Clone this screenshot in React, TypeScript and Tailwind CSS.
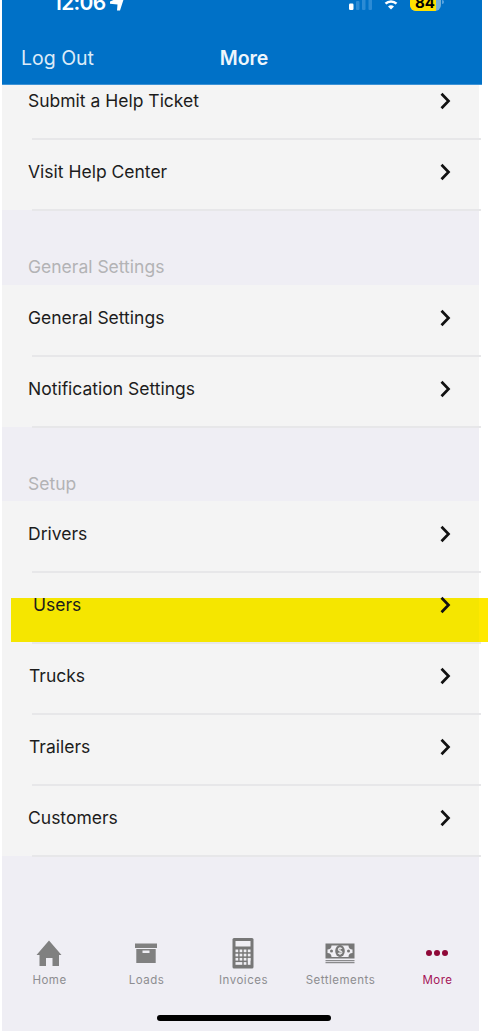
import type { ReactNode } from 'react';
import clsx from 'clsx';

type Item = { label: string; highlighted?: boolean; indent?: string };
type Section = { title?: string; items: Item[] };

const sections: Section[] = [
  { items: [{ label: 'Submit a Help Ticket' }, { label: 'Visit Help Center' }] },
  {
    title: 'General Settings',
    items: [{ label: 'General Settings' }, { label: 'Notification Settings' }],
  },
  {
    title: 'Setup',
    items: [
      { label: 'Drivers' },
      { label: 'Users', highlighted: true, indent: 'pl-[31px]' },
      { label: 'Trucks', indent: 'pl-[27px]' },
      { label: 'Trailers', indent: 'pl-[27px]' },
      { label: 'Customers' },
    ],
  },
];

function HomeIcon() {
  return (
    <svg width="26" height="32" viewBox="0 0 26 32" fill="#808080">
      <path d="M13 3.5 25.5 18H23v11h-6.500v-8h-6.500v8H3.500V18H.5z" />
    </svg>
  );
}

function LoadsIcon() {
  return (
    <svg width="22" height="32" viewBox="0 0 22 32" fill="#808080">
      <path d="M0 6.500h22v4.500H0z" />
      <path fillRule="evenodd" d="M1.300 12h19.400v14H1.300zM7.500 13.600v2.400h7v-2.400z" />
    </svg>
  );
}

function InvoicesIcon() {
  return (
    <svg width="22" height="32" viewBox="0 0 22 32">
      <rect x=".5" y="1" width="21" height="30.500" rx="1.500" fill="#777" />
      <g fill="#f0eff4">
        <rect x="3.500" y="4" width="15" height="5.500" />
        {[12.5, 16.7, 20.9].map((y) =>
          [3.5, 7.6, 11.7, 15.8].map((x) => <rect key={`${x}-${y}`} x={x} y={y} width="2.700" height="2.700" />),
        )}
        <rect x="3.500" y="25.100" width="6.800" height="2.700" />
        <rect x="11.700" y="25.100" width="2.700" height="2.700" />
        <rect x="15.800" y="21" width="2.700" height="6.800" />
      </g>
    </svg>
  );
}

function SettlementsIcon() {
  return (
    <svg width="30" height="32" viewBox="0 0 30 32">
      <rect x=".5" y="6.500" width="29" height="15" fill="#777" />
      <path d="M6.500 8.500h17c0 2.500 1.500 4 4 4v3.500c-2.500 0-4 1.500-4 4h-17c0-2.500-1.500-4-4-4v-3.500c2.500 0 4-1.500 4-4z" fill="#f0eff4" />
      <ellipse cx="15" cy="14" rx="4.800" ry="6" fill="#777" />
      <circle cx="6.500" cy="14" r="1.500" fill="#777" />
      <circle cx="23.500" cy="14" r="1.500" fill="#777" />
      <path d="M17 11.700c-.5-.8-3.700-1-3.700.7 0 1.900 3.700 1 3.700 3 0 1.700-3.300 1.600-4 .5M15 10v8" fill="none" stroke="#e4e4e6" strokeWidth="1.100" />
      <path d="M.5 23h29v1.200H.5zM.5 25h29v1.300H.5z" fill="#8a8a8c" />
    </svg>
  );
}

function MoreIcon() {
  return (
    <svg width="24" height="32" viewBox="0 0 24 32" fill="#8f0838">
      <circle cx="4" cy="16" r="3" />
      <circle cx="12" cy="16" r="3" />
      <circle cx="20" cy="16" r="3" />
    </svg>
  );
}

const tabs: { label: string; icon: ReactNode; active?: boolean }[] = [
  { label: 'Home', icon: <HomeIcon /> },
  { label: 'Loads', icon: <LoadsIcon /> },
  { label: 'Invoices', icon: <InvoicesIcon /> },
  { label: 'Settlements', icon: <SettlementsIcon /> },
  { label: 'More', icon: <MoreIcon />, active: true },
];

function StatusBar() {
  return (
    <div className="flex h-[32px] items-start justify-between pl-[51px] pr-[38px] text-white">
      <div className="-mt-[10px] flex items-start gap-[5px]">
        <span className="text-[21px] font-semibold leading-[26px] tracking-[-0.7px]">12:06</span>
        <svg className="mt-[5px]" width="15" height="16" viewBox="0 0 15 16" fill="currentColor">
          <path d="M15 0 10 15.500H7L7.500 9.500 0 8.800V6.500z" />
        </svg>
      </div>
      <div className="flex items-start">
        <svg width="25" height="12" viewBox="0 0 25 12">
          <rect x="1" y="3.500" width="4.500" height="6.500" rx="1.200" fill="#fff" />
          <g fill="#2c8bd5">
            <rect x="8" y="1" width="3.500" height="9" rx="1" />
            <rect x="14" y="-4" width="3.500" height="14" rx="1" />
            <rect x="20.500" y="-6" width="3.500" height="16" rx="1" />
          </g>
        </svg>
        <svg className="ml-[8px]" width="20" height="12" viewBox="0 0 20 12" fill="none" stroke="#fff">
          <path d="M1 .3a13 13 0 0 1 18 0" strokeWidth="2.500" transform="translate(0 -1)" />
          <path d="M4.500 3.700a8 8 0 0 1 11 0" strokeWidth="2.500" />
          <path d="M7 6.500a4.500 4.500 0 0 1 6 0L10 9.600z" fill="#fff" stroke="none" />
        </svg>
        <div className="ml-[9px] flex items-start">
          <div className="-mt-[10px] flex h-[21px] w-[31px] overflow-hidden rounded-[6px] bg-[#73afd8]">
            <span className="flex w-[26px] items-center bg-[#ffe100] pl-[5px] pt-[3px] text-[15px] font-bold leading-none text-black">84</span>
          </div>
          <span className="ml-px h-[4px] w-[2px] rounded-r-full bg-[#5aa4df]" />
        </div>
      </div>
    </div>
  );
}

function Row({ label, highlighted, indent = 'pl-[26px]' }: Item) {
  return (
    <div className="relative flex h-[71px] w-[477px] shrink-0 flex-col bg-[#f4f4f4]">
      {highlighted && (
        <div className="absolute left-[9px] top-[26px] z-10 flex h-[44px] w-[477px] bg-[#f5e600]">
          <span className="ml-auto w-[9px] bg-[#ffe900]" />
        </div>
      )}
      <div className={clsx('relative z-20 flex flex-1 items-center justify-between pb-[3px] pr-[28px]', indent)}>
        <span className="text-[17.5px] leading-6 text-[#1c1c1c]">{label}</span>
        <svg width="12" height="18" viewBox="0 0 12 18" fill="none" stroke="#111" strokeWidth="2.700">
          <path d="m2.500 1.800 7 7.200-7 7.200" />
        </svg>
      </div>
      <div className="relative top-px z-20 ml-[30px] h-[2px] w-[449px] bg-[#e7e7e9]" />
    </div>
  );
}

export default function App() {
  return (
    <div className="h-[1031px] w-[488px] overflow-hidden bg-white pl-[2px] font-[Inter,'Liberation_Sans',sans-serif]">
      <div className="flex h-full w-[480px] flex-col">
        <header className="relative z-30 h-[85px] shrink-0 border-b border-[#3c92d6] bg-[#0071c7]">
          <StatusBar />
          <div className="grid h-[52px] grid-cols-3 items-center pl-[19px] pr-[15px] pt-[2px]">
            <span className="text-[19.5px] text-[#dcebf8]">Log Out</span>
            <span className="text-center text-[19.5px] font-semibold text-[#eef6fc]">More</span>
          </div>
        </header>

        {/* List is scrolled a little, its first row sits partly under the header */}
        <main className="-mt-[17px] w-[477px] flex-1 bg-[#efeef4]">
          {sections.map((section, i) => (
            <section key={i}>
              {section.title && (
                <h2 className={clsx('flex items-end pl-[26px] text-[17.5px] leading-6 text-[#b3b3b5]', i === 1 ? 'h-[75px] pb-[6px]' : 'h-[74px] pb-[5px]')}>
                  {section.title}
                </h2>
              )}
              {section.items.map((item) => (
                <Row key={item.label} {...item} />
              ))}
            </section>
          ))}
        </main>

        <footer className="h-[100px] w-[477px] shrink-0 bg-[#efeef4]">
          <nav className="-ml-px grid h-[84px] w-[485px] grid-cols-5 pt-[6px]">
            {tabs.map(({ label, icon, active }) => (
              <div key={label} className="flex flex-col items-center">
                <div className="pr-px">{icon}</div>
                <span className={clsx('mt-[3px] text-[11.500px] leading-4 tracking-[0.5px]', active ? 'text-[#a51457]' : 'text-[#8d8d90]')}>{label}</span>
              </div>
            ))}
          </nav>
          <div className="ml-[155px] h-[6px] w-[174px] rounded-full bg-black" />
        </footer>
      </div>
    </div>
  );
}
